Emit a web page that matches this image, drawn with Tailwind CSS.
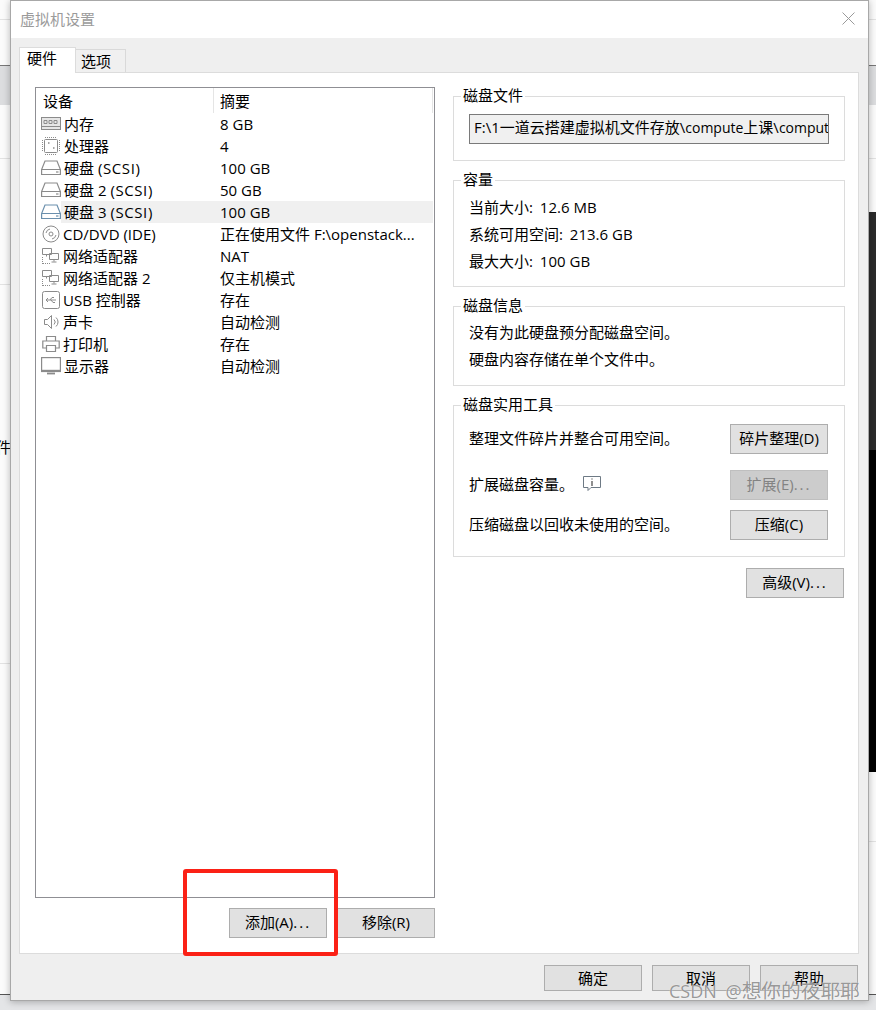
<!DOCTYPE html>
<html lang="zh">
<head>
<meta charset="UTF-8" />
<script src="https://cdn.jsdelivr.net/npm/@tailwindcss/browser@4"></script>
<title>虚拟机设置</title>
</head>
<body class="relative w-[876px] h-[1010px] overflow-hidden bg-[#e4e5e7] font-['Open_Sans','Noto_Sans_CJK_SC',sans-serif] text-[15px] leading-[22px] text-black">

  <!-- window behind the dialog -->
  <div class="absolute inset-x-0 top-0 h-[995px] border-b border-[#555] bg-[#fbfbfb]">
    <div class="mt-[19px] h-px bg-[#e2e2e2]"></div>
    <div class="mt-[45px] h-[40px] border-t border-[#777] bg-[#dcdddf]"></div>
    <div class="mt-[53px] h-px bg-[#e2e2e2]"></div>
    <div class="mt-[125px] h-px bg-[#e2e2e2]"></div>
    <div class="mt-[378px] h-px bg-[#e2e2e2]"></div>
    <div class="ml-auto mt-[177px] h-px w-[7px] bg-[#e2e2e2]"></div>
    <p class="absolute left-[-19px] top-[436px]">文件</p>
  </div>
  <div class="absolute right-0 top-[212px] h-[560px] w-[7px] bg-black">
    <div class="h-[238px] bg-[#2b2b2b]"></div>
  </div>

  <!-- dialog -->
  <div class="absolute left-[10px] top-0 flex h-[1001px] w-[859px] flex-col border border-[#a8a8a8] bg-[#efefef] shadow-[0_1px_7px_rgba(0,0,0,0.28)]">
    <div class="flex h-[37px] shrink-0 items-center justify-between bg-white pb-[2px] pl-[9px] pr-[13px]">
      <span class="text-[#9b9b9b]">虚拟机设置</span>
      <svg width="13" height="13" viewBox="0 0 13 13" fill="none" stroke="#9a9a9a" stroke-width="1"><path d="M.5.5l12 12M12.500.5l-12 12" /></svg>
    </div>

    <!-- tabs -->
    <div class="ml-2 mt-[9px] flex h-[25px] shrink-0 items-start">
      <div class="z-10 h-[26px] w-[57px] border border-b-0 border-[#dcdcdc] bg-white pl-[7px] leading-[21px]">硬件</div>
      <div class="mt-[2px] h-[23px] w-[50px] border border-b-0 border-l-0 border-[#d9d9d9] bg-[#f0f0f0] pl-[5px] leading-[22px]">选项</div>
    </div>

    <!-- tab panel -->
    <div class="ml-2 flex h-[882px] w-[840px] gap-[18px] border border-[#dcdcdc] bg-white pl-[15px] pt-[14px]">
      <div class="flex w-[400px] shrink-0 flex-col">
        <div class="h-[811px] border border-[#8f8f94] px-px">
          <div class="flex h-[25px] items-center">
            <span class="flex h-full w-[177px] items-center border-r border-[#e5e5e5] pl-[6px]">设备</span>
            <span class="flex h-full flex-1 items-center border-r border-[#e5e5e5] pl-[6px]">摘要</span>
          </div>
          <ul>
            <li class="flex h-[22px] items-center"><span class="flex w-[178px] items-center"><svg class="ml-[4px] mr-[3px]" width="20" height="14" viewBox="0 0 20 14" fill="#e6e6e6" stroke="#8b8b8b"><rect x="0.5" y="0.5" width="19" height="12"/><path fill="none" d="M3 3.500h3v3H3zM8 3.500h3v3H8zM13 3.500h3v3h-3zM0 9.500h20" /></svg>内存</span><span class="pl-[5px]">8 GB</span></li>
            <li class="flex h-[22px] items-center"><span class="flex w-[178px] items-center"><svg class="ml-[4px] mr-[3px]" width="20" height="20" viewBox="0 0 20 20" fill="none" stroke="#8b8b8b"><rect x="3.500" y="3.500" width="13" height="13" rx="1"/><path stroke-dasharray="1 1" d="M4 1.500h12M4 18.500h12M1.500 4v12M18.500 4v12"/><path d="M7 7h1.500M12 12h1.500" stroke-width="1.500"/></svg>处理器</span><span class="pl-[5px]">4</span></li>
            <li class="flex h-[22px] items-center"><span class="flex w-[178px] items-center"><svg class="ml-[4px] mr-[3px]" width="20" height="16" viewBox="0 0 20 16" fill="none" stroke="#8b8b8b" stroke-width="1.200"><path d="M4 1h12l3.400 8.500V14.500H.6V9.500zM.6 9.500h18.800"/><path d="M15 12h2.500"/></svg><span>硬盘 <span class="tracking-[.6px]">(SCSI)</span></span></span><span class="pl-[5px]">100 GB</span></li>
            <li class="flex h-[22px] items-center"><span class="flex w-[178px] items-center"><svg class="ml-[4px] mr-[3px]" width="20" height="16" viewBox="0 0 20 16" fill="none" stroke="#8b8b8b" stroke-width="1.200"><path d="M4 1h12l3.400 8.500V14.500H.6V9.500zM.6 9.500h18.800"/><path d="M15 12h2.500"/></svg><span>硬盘 2 <span class="tracking-[.6px]">(SCSI)</span></span></span><span class="pl-[5px]">50 GB</span></li>
            <li class="flex h-[22px] items-center"><span class="flex w-[178px] items-center"><svg class="ml-[4px]" width="20" height="16" viewBox="0 0 20 16" fill="none" stroke="#6a8fad" stroke-width="1.200"><path d="M4 1h12l3.400 8.500V14.500H.6V9.500zM.6 9.500h18.800"/><path d="M15 12h2.500"/></svg><span class="flex h-[22px] flex-1 items-center whitespace-pre bg-[#f0f0f0] pl-[3px]">硬盘 3 <span class="tracking-[.6px]">(SCSI)</span></span></span><span class="flex h-[22px] flex-1 items-center bg-[#f0f0f0] pl-[5px]">100 GB</span></li>
            <li class="flex h-[22px] items-center"><span class="flex w-[178px] items-center"><svg class="ml-[5px] mr-[3px]" width="18" height="18" viewBox="0 0 18 18" fill="none" stroke="#8b8b8b"><circle cx="9" cy="9" r="8"/><circle cx="9" cy="9" r="2"/><path d="M4 8a5 5 0 0 1 4-4M14 10a5 5 0 0 1-4 4"/></svg>CD/DVD (IDE)</span><span class="pl-[5px]">正在使用文件 F:\openstack...</span></li>
            <li class="flex h-[22px] items-center"><span class="flex w-[178px] items-center"><svg class="ml-[5px] mr-[3px]" width="18" height="18" viewBox="0 0 18 18" fill="none" stroke="#8b8b8b"><path d="M.5 1.500h9v6h-9zM7.500 6.500h9v6h-9zM12 12.500v2M9.500 15h5M4.500 7.500v2"/><path stroke-dasharray="1 1" d="M.5 10v7M1 16.500h8"/></svg>网络适配器</span><span class="pl-[5px]">NAT</span></li>
            <li class="flex h-[22px] items-center"><span class="flex w-[178px] items-center"><svg class="ml-[5px] mr-[3px]" width="18" height="18" viewBox="0 0 18 18" fill="none" stroke="#8b8b8b"><path d="M.5 1.500h9v6h-9zM7.500 6.500h9v6h-9zM12 12.500v2M9.500 15h5M4.500 7.500v2"/><path stroke-dasharray="1 1" d="M.5 10v7M1 16.500h8"/></svg>网络适配器 2</span><span class="pl-[5px]">仅主机模式</span></li>
            <li class="flex h-[22px] items-center"><span class="flex w-[178px] items-center"><svg class="ml-[5px] mr-[3px]" width="18" height="18" viewBox="0 0 18 18" fill="none" stroke="#8b8b8b"><rect x="0.500" y="0.500" width="17" height="17" rx="2"/><path d="M4 9h10M6 7L4 9l2 2M8 9l2-2.500h2M9 9l2 2.500h2"/></svg>USB 控制器</span><span class="pl-[5px]">存在</span></li>
            <li class="flex h-[22px] items-center"><span class="flex w-[178px] items-center"><svg class="ml-[7px] mr-[3px]" width="16" height="16" viewBox="0 0 16 16" fill="none" stroke="#8b8b8b"><path d="M.5 5.500h3l4-4v13l-4-4h-3z"/><path d="M10 5.500a3.500 3.500 0 0 1 0 5M12 3.500a6 6 0 0 1 0 9"/></svg>声卡</span><span class="pl-[5px]">自动检测</span></li>
            <li class="flex h-[22px] items-center"><span class="flex w-[178px] items-center"><svg class="ml-[5px] mr-[3px]" width="18" height="18" viewBox="0 0 18 18" fill="none" stroke="#8b8b8b" stroke-width="1.200"><path d="M4.500 6V1.500h9V6M4 13H.8V6h16.400v7H14"/><path d="M4.500 10.500h9v6h-9z"/></svg>打印机</span><span class="pl-[5px]">存在</span></li>
            <li class="flex h-[22px] items-center"><span class="flex w-[178px] items-center"><svg class="ml-[4px] mr-[3px]" width="20" height="18" viewBox="0 0 20 18" fill="none" stroke="#8b8b8b" stroke-width="1.200"><rect x="0.600" y="0.600" width="18.800" height="12.800"/><path d="M0 14.500h20"/><path d="M6 16.500h8" stroke-width="1.800"/></svg>显示器</span><span class="pl-[5px]">自动检测</span></li>
          </ul>
        </div>
        <div class="mt-[10px] flex justify-end gap-[10px]">
          <button class="h-[30px] w-[98px] border border-[#adadad] bg-[#e1e1e1] pb-[2px]">添加(A)<span class="tracking-[2px]">...</span></button>
          <button class="h-[30px] w-[98px] border border-[#adadad] bg-[#e1e1e1] pb-[2px]">移除(R)</button>
        </div>
      </div>

      <div class="flex w-[392px] flex-col pt-[9px]">
        <fieldset class="h-[65px] border border-[#dcdcdc] px-[15px]">
          <legend class="absolute -mt-[13px] ml-[-8px] bg-white px-[2px]">磁盘文件</legend>
          <div class="mt-[17px] h-[30px] w-[360px] overflow-hidden whitespace-nowrap border border-[#7a7a7a] bg-[#f0f0f0] pl-[4px] leading-[25px]">F:\1一道云搭建虚拟机文件存放\<span class="text-[14px]">compute</span>上课\<span class="text-[14px]">compute</span></div>
        </fieldset>
        <fieldset class="mt-[19px] h-[107px] border border-[#dcdcdc] px-[15px] pt-[13px]">
          <legend class="absolute -mt-[26px] ml-[-8px] bg-white px-[2px]">容量</legend>
          <p class="leading-[27px]">当前大小<span class="mr-[3px]">:</span> 12.6 MB</p>
          <p class="leading-[27px]">系统可用空间<span class="mr-[3px]">:</span> 213.6 GB</p>
          <p class="leading-[27px]">最大大小<span class="mr-[3px]">:</span> 100 GB</p>
        </fieldset>
        <fieldset class="mt-[19px] h-[80px] border border-[#dcdcdc] px-[15px] pt-[12px]">
          <legend class="absolute -mt-[25px] ml-[-8px] bg-white px-[2px]">磁盘信息</legend>
          <p class="leading-[27px]">没有为此硬盘预分配磁盘空间。</p>
          <p class="leading-[27px]">硬盘内容存储在单个文件中。</p>
        </fieldset>
        <fieldset class="mt-[19px] h-[152px] border border-[#dcdcdc] pl-[15px] pr-[16px] pt-[18px]">
          <legend class="absolute -mt-[31px] ml-[-8px] bg-white px-[2px]">磁盘实用工具</legend>
          <div class="flex h-[30px] items-center justify-between">
            <span class="pb-[3px]">整理文件碎片并整合可用空间。</span>
            <button class="h-[30px] w-[98px] border border-[#adadad] bg-[#e1e1e1] pb-[2px]">碎片整理(D)</button>
          </div>
          <div class="mt-4 flex h-[30px] items-center justify-between">
            <span class="flex items-center pb-[3px]">扩展磁盘容量。<svg class="ml-[9px]" width="18" height="17" viewBox="0 0 18 17" fill="none" stroke="#6e7a85"><path d="M.5 1.500h17v11H8l-3 3v-3H.5z"/><path d="M9 3.500v1M9 6v5" stroke="#555" stroke-width="1.300"/></svg></span>
            <button disabled class="h-[30px] w-[98px] border border-[#bfbfbf] bg-[#cccccc] pb-[2px] text-[#838383]">扩展(E)<span class="tracking-[2px]">...</span></button>
          </div>
          <div class="mt-[10px] flex h-[30px] items-center justify-between">
            <span class="pb-[3px]">压缩磁盘以回收未使用的空间。</span>
            <button class="h-[30px] w-[98px] border border-[#adadad] bg-[#e1e1e1] pb-[2px]">压缩(C)</button>
          </div>
        </fieldset>
        <button class="ml-auto mr-px mt-[11px] h-[30px] w-[98px] border border-[#adadad] bg-[#e1e1e1] pb-[2px]">高级(V)<span class="tracking-[2px]">...</span></button>
      </div>
    </div>

    <!-- footer buttons -->
    <div class="mr-[10px] mt-[11px] flex justify-end gap-[10px]">
      <button class="h-[26px] w-[98px] border border-[#adadad] bg-[#e1e1e1]">确定</button>
      <button class="h-[26px] w-[98px] border border-[#adadad] bg-[#e1e1e1]">取消</button>
      <button class="h-[26px] w-[98px] border border-[#adadad] bg-[#e1e1e1]">帮助</button>
    </div>
  </div>

  <!-- annotation and watermark lie over the screenshot -->
  <div class="absolute left-[183px] top-[869px] h-[87px] w-[155px] rounded-[3px] border-[4px] border-[#fb2116]"></div>
  <p class="absolute left-[669px] top-[980px] text-[18px] leading-[22px] text-[#7d7d7d]/80 [text-shadow:0_0_1px_white]">CSDN <span class="ml-[4px]">@</span><span class="text-[19.7px]">想你的夜耶耶</span></p>
</body>
</html>
